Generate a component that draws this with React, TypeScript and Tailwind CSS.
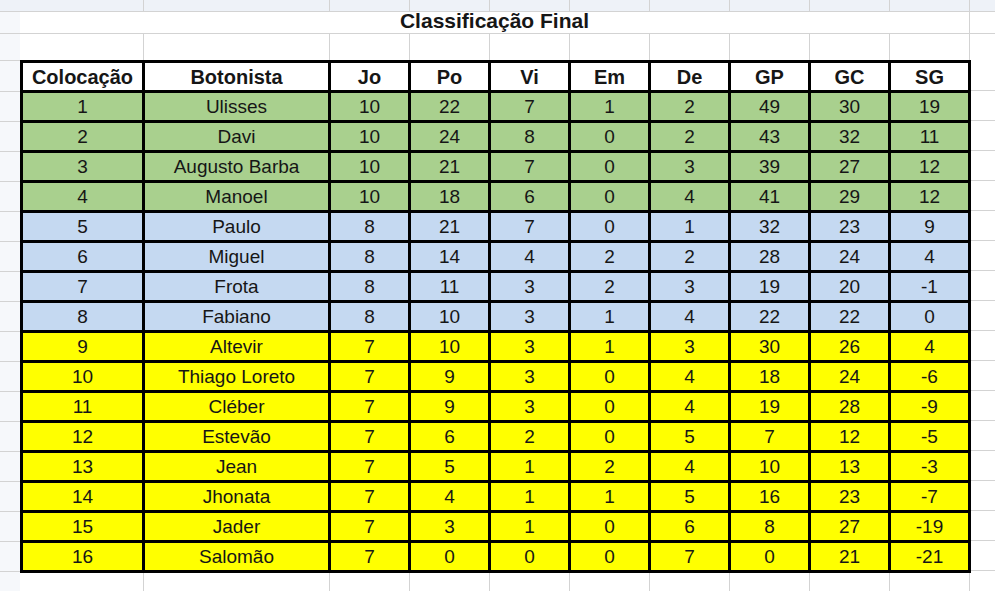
import React from 'react'

type Row = [number, string, number, number, number, number, number, number, number, number]

const rows: Row[] = [
    [1, 'Ulisses', 10, 22, 7, 1, 2, 49, 30, 19],
    [2, 'Davi', 10, 24, 8, 0, 2, 43, 32, 11],
    [3, 'Augusto Barba', 10, 21, 7, 0, 3, 39, 27, 12],
    [4, 'Manoel', 10, 18, 6, 0, 4, 41, 29, 12],
    [5, 'Paulo', 8, 21, 7, 0, 1, 32, 23, 9],
    [6, 'Miguel', 8, 14, 4, 2, 2, 28, 24, 4],
    [7, 'Frota', 8, 11, 3, 2, 3, 19, 20, -1],
    [8, 'Fabiano', 8, 10, 3, 1, 4, 22, 22, 0],
    [9, 'Altevir', 7, 10, 3, 1, 3, 30, 26, 4],
    [10, 'Thiago Loreto', 7, 9, 3, 0, 4, 18, 24, -6],
    [11, 'Cléber', 7, 9, 3, 0, 4, 19, 28, -9],
    [12, 'Estevão', 7, 6, 2, 0, 5, 7, 12, -5],
    [13, 'Jean', 7, 5, 1, 2, 4, 10, 13, -3],
    [14, 'Jhonata', 7, 4, 1, 1, 5, 16, 23, -7],
    [15, 'Jader', 7, 3, 1, 0, 6, 8, 27, -19],
    [16, 'Salomão', 7, 0, 0, 0, 7, 0, 21, -21],
]

const headers = ['Colocação', 'Botonista', 'Jo', 'Po', 'Vi', 'Em', 'De', 'GP', 'GC', 'SG']

// background colour by position band
function rowBg(pos: number) {
    if (pos <= 4) return 'bg-[#a9d08e]'
    if (pos <= 8) return 'bg-[#c5d9f1]'
    return 'bg-[#ffff00]'
}

// empty sheet cells that follow the table's column lines
function GridCells({ className }: { className: string }) {
    const widths = ['w-[124px]', 'w-[186px]', 'w-[80px]', 'w-[80px]', 'w-[80px]', 'w-[80px]', 'w-[80px]', 'w-[80px]', 'w-[80px]', 'w-[80px]']
    return (
        <div className={`flex ${className}`}>
            {widths.map((w, i) => (
                <div key={i} className={`${w} shrink-0 border-r border-[#d3d3d3]`} />
            ))}
            <div className="flex-1" />
        </div>
    )
}

export default function App() {
    return (
        <div className="w-[995px] h-[591px] overflow-hidden bg-white flex text-[#161616] font-['Liberation_Sans',Arial,sans-serif]">
            {/* row gutter */}
            <div className="w-[20px] shrink-0 bg-[#f6f8fb] flex flex-col">
                <div className="h-[12px] shrink-0 bg-[#eef2f8] border-b border-[#d3d3d3]" />
                <div className="h-[22px] shrink-0 border-b border-[#d3d3d3]" />
                <div className="h-[27px] shrink-0 border-b border-[#d3d3d3]" />
                <div className="h-[31px] shrink-0 border-b border-[#d3d3d3]" />
                {rows.map(r => (
                    <div key={r[0]} className="h-[30px] shrink-0 border-b border-[#d3d3d3]" />
                ))}
            </div>

            <div className="flex-1 flex flex-col">
                <GridCells className="h-[12px] shrink-0 bg-[#eef2f8] border-b border-[#d3d3d3]" />

                {/* merged title row */}
                <div className="h-[22px] shrink-0 flex border-b border-[#d3d3d3]">
                    <div className="w-[950px] shrink-0 border-r border-[#d3d3d3] flex items-center justify-center pb-[4px] text-[21px] leading-none font-bold">
                        Classificação Final
                    </div>
                    <div className="flex-1" />
                </div>

                <GridCells className="h-[26px] shrink-0" />

                <div className="flex shrink-0">
                    <div className="grid grid-cols-[119px_183px_repeat(8,77px)] auto-rows-[27px] gap-[3px] p-[3px] bg-black">
                        {headers.map(h => (
                            <div key={h} className="bg-white flex items-center justify-center text-[20px] font-bold leading-none">
                                {h}
                            </div>
                        ))}
                        {rows.map(r =>
                            r.map((v, i) => (
                                <div
                                    key={`${r[0]}-${i}`}
                                    className={`${rowBg(r[0])} flex items-center justify-center text-[19px] leading-none`}
                                >
                                    {v}
                                </div>
                            ))
                        )}
                    </div>
                    <div className="flex-1 flex flex-col">
                        <div className="h-[31px] shrink-0 border-b border-[#d3d3d3]" />
                        {rows.map(r => (
                            <div key={r[0]} className="h-[30px] shrink-0 border-b border-[#d3d3d3]" />
                        ))}
                    </div>
                </div>

                <GridCells className="flex-1" />
            </div>
        </div>
    )
}
